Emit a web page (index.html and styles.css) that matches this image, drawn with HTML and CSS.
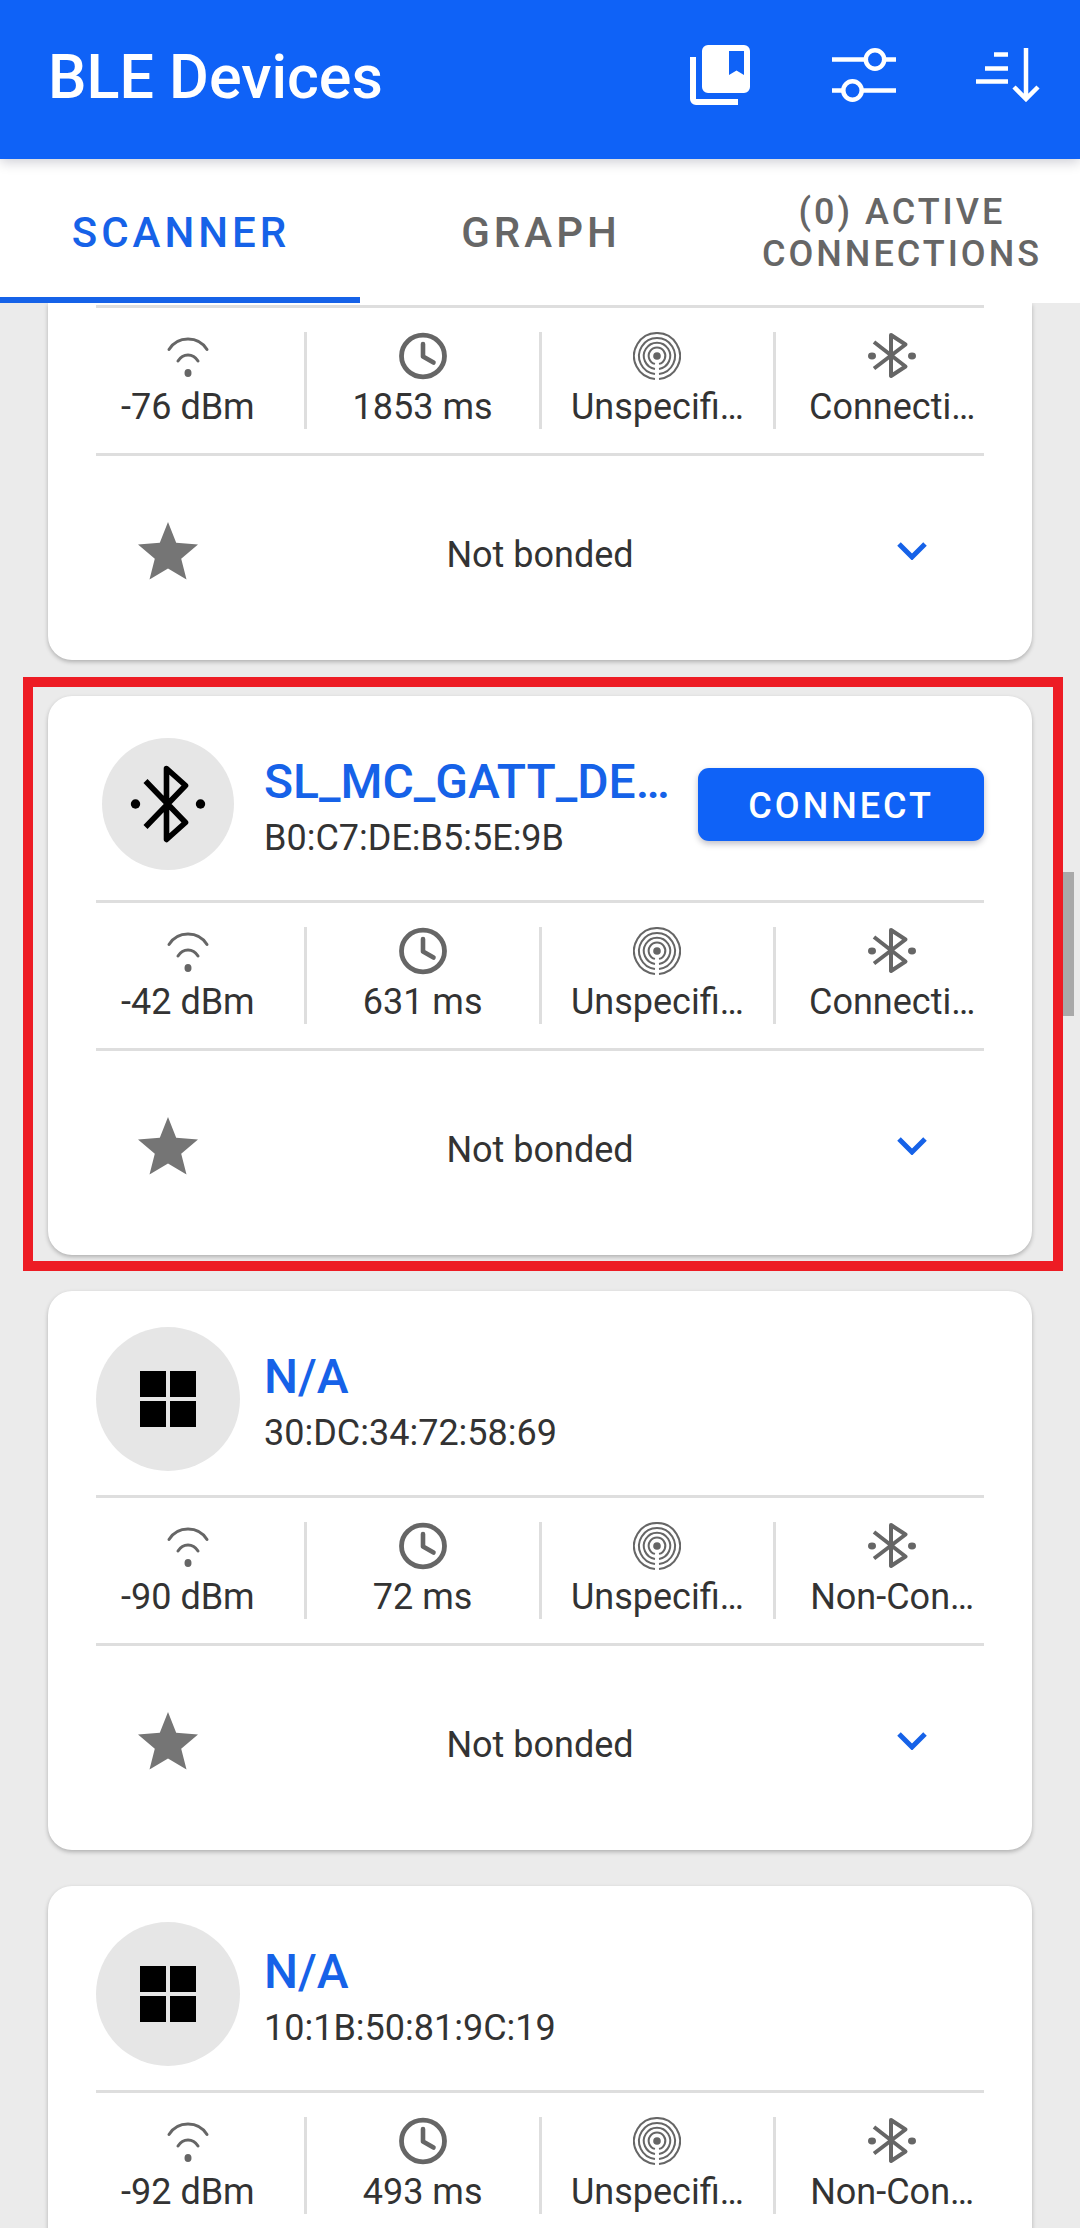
FILE: index.html
```html
<!DOCTYPE html>
<html lang="en">
<head>
<meta charset="utf-8">
<meta name="viewport" content="width=device-width, initial-scale=1">
<title>BLE Devices</title>
<link rel="stylesheet" href="styles.css">
</head>
<body>
<svg class="sprite" aria-hidden="true">
  <symbol id="i-signal" viewBox="0 0 48 48">
    <path d="M5 17.5C9 11 16 7 24 7s15 4 19 10.500M14 29c2.500-4 6-6 10-6s7.500 2 10 6" fill="none" stroke="currentColor" stroke-width="3" stroke-linecap="round"/>
    <ellipse cx="24" cy="41" rx="3.500" ry="4" fill="currentColor"/>
  </symbol>
  <symbol id="i-clock" viewBox="0 0 48 48">
    <ellipse cx="24" cy="24" rx="21.500" ry="20.800" fill="none" stroke="currentColor" stroke-width="4.800"/>
    <path d="M24 12v12.500l10.500 6" fill="none" stroke="currentColor" stroke-width="4.600" stroke-linecap="round" stroke-linejoin="round"/>
  </symbol>
  <symbol id="i-beacon" viewBox="0 0 48 48">
    <g fill="none" stroke="currentColor" stroke-width="2">
      <path d="M22 46.900A23 23 0 1 1 26 46.900"/>
      <path d="M22 41.900A18 18 0 1 1 26 41.900"/>
      <path d="M22 36.900A13.200 13.200 0 1 1 26 36.900"/>
      <path d="M22 31.900A8.300 8.300 0 1 1 26 31.900"/>
    </g>
    <circle cx="24" cy="24" r="3.800" fill="currentColor"/>
  </symbol>
  <symbol id="i-bt" viewBox="0 0 48 48">
    <path d="M6 10L37.500 34.500 23 44V3L37.500 12.500 6 36.500" fill="none" stroke="currentColor" stroke-width="4" stroke-linejoin="round"/>
    <ellipse cx="4" cy="24" rx="4" ry="3.400" fill="currentColor"/>
    <ellipse cx="44" cy="24" rx="4" ry="3.400" fill="currentColor"/>
  </symbol>
  <symbol id="i-bt-large" viewBox="0 0 80 80">
    <path d="M17.500 17L57.500 58.500 38.500 75.500V4.500L57.500 21.500 17.500 63" fill="none" stroke="currentColor" stroke-width="5.600" stroke-linejoin="round"/>
    <circle cx="7.500" cy="40" r="4.700" fill="currentColor"/>
    <circle cx="72.500" cy="40" r="4.700" fill="currentColor"/>
  </symbol>
  <symbol id="i-grid" viewBox="0 0 56 56">
    <path d="M0 0h26v26H0zM30 0h26v26H30zM0 30h26v26H0zM30 30h26v26H30z" fill="currentColor"/>
  </symbol>
  <symbol id="i-star" viewBox="0 0 60 58">
    <path d="M30 0l8.200 20.800L60 22.500 43.200 36.800 48.500 57.500 30 46.500 11.500 57.500 16.800 36.800 0 22.500l21.800-1.700z" fill="currentColor"/>
  </symbol>
  <symbol id="i-chevron" viewBox="0 0 30 18">
    <path d="M2 2l13 13L28 2" fill="none" stroke="currentColor" stroke-width="5"/>
  </symbol>
</svg>

<header class="app-bar">
  <h1 class="app-bar__title">BLE Devices</h1>
  <button class="app-bar__action" type="button" aria-label="Saved mappings">
    <svg width="60" height="60" viewBox="0 0 60 60" fill="currentColor"><path d="M0 12h6v42h42v6H6a6 6 0 0 1-6-6z"/><path fill-rule="evenodd" d="M18 0h36a6 6 0 0 1 6 6v36a6 6 0 0 1-6 6H18a6 6 0 0 1-6-6V6a6 6 0 0 1 6-6zM39 6v24l7.500-4.500L54 30V6z"/></svg>
  </button>
  <button class="app-bar__action" type="button" aria-label="Filter">
    <svg width="64" height="54" viewBox="0 0 64 54" fill="none" stroke="currentColor" stroke-width="4.500"><path d="M0 11.500h33M53 11.500h11M0 42.500h11M31 42.500h33"/><circle cx="43" cy="11.500" r="9.200"/><circle cx="20.500" cy="42.500" r="9.200"/></svg>
  </button>
  <button class="app-bar__action" type="button" aria-label="Sort">
    <svg width="64" height="54" viewBox="0 0 64 54" fill="none" stroke="currentColor" stroke-width="4.500"><path d="M18 6.500h14M9 20.500h23M0 33.500h32M50 0v50M38 39l12 12 12-12"/></svg>
  </button>
</header>

<nav class="tabs">
  <a class="tab tab--active" href="#scanner" aria-current="page">SCANNER</a>
  <a class="tab" href="#graph">GRAPH</a>
  <a class="tab tab--small" href="#connections">(0) ACTIVE CONNECTIONS</a>
</nav>

<main class="list" id="scanner">
  <article class="card card--scrolled">
    <ul class="stats">
      <li class="stat"><svg class="icon"><use href="#i-signal"/></svg>-76 dBm</li>
      <li class="stat"><svg class="icon"><use href="#i-clock"/></svg>1853 ms</li>
      <li class="stat"><svg class="icon"><use href="#i-beacon"/></svg>Unspecifi…</li>
      <li class="stat"><svg class="icon"><use href="#i-bt"/></svg>Connecti…</li>
    </ul>
    <div class="actions">
      <button class="actions__btn" type="button" aria-label="Favorite"><svg class="star"><use href="#i-star"/></svg></button>
      <span class="actions__status">Not bonded</span>
      <button class="actions__btn" type="button" aria-label="Expand"><svg class="chevron"><use href="#i-chevron"/></svg></button>
    </div>
  </article>

  <article class="card card--highlighted">
    <div class="device">
      <span class="avatar avatar--small"><svg class="avatar__bt"><use href="#i-bt-large"/></svg></span>
      <div class="device__text">
        <h2 class="device__name">SL_MC_GATT_DE…</h2>
        <p class="device__address">B0:C7:DE:B5:5E:9B</p>
      </div>
      <button class="connect" type="button">CONNECT</button>
    </div>
    <ul class="stats">
      <li class="stat"><svg class="icon"><use href="#i-signal"/></svg>-42 dBm</li>
      <li class="stat"><svg class="icon"><use href="#i-clock"/></svg>631 ms</li>
      <li class="stat"><svg class="icon"><use href="#i-beacon"/></svg>Unspecifi…</li>
      <li class="stat"><svg class="icon"><use href="#i-bt"/></svg>Connecti…</li>
    </ul>
    <div class="actions">
      <button class="actions__btn" type="button" aria-label="Favorite"><svg class="star"><use href="#i-star"/></svg></button>
      <span class="actions__status">Not bonded</span>
      <button class="actions__btn" type="button" aria-label="Expand"><svg class="chevron"><use href="#i-chevron"/></svg></button>
    </div>
  </article>

  <article class="card">
    <div class="device">
      <span class="avatar"><svg class="avatar__grid"><use href="#i-grid"/></svg></span>
      <div class="device__text">
        <h2 class="device__name">N/A</h2>
        <p class="device__address">30:DC:34:72:58:69</p>
      </div>
    </div>
    <ul class="stats">
      <li class="stat"><svg class="icon"><use href="#i-signal"/></svg>-90 dBm</li>
      <li class="stat"><svg class="icon"><use href="#i-clock"/></svg>72 ms</li>
      <li class="stat"><svg class="icon"><use href="#i-beacon"/></svg>Unspecifi…</li>
      <li class="stat"><svg class="icon"><use href="#i-bt"/></svg>Non-Con…</li>
    </ul>
    <div class="actions">
      <button class="actions__btn" type="button" aria-label="Favorite"><svg class="star"><use href="#i-star"/></svg></button>
      <span class="actions__status">Not bonded</span>
      <button class="actions__btn" type="button" aria-label="Expand"><svg class="chevron"><use href="#i-chevron"/></svg></button>
    </div>
  </article>

  <article class="card card--cut">
    <div class="device">
      <span class="avatar"><svg class="avatar__grid"><use href="#i-grid"/></svg></span>
      <div class="device__text">
        <h2 class="device__name">N/A</h2>
        <p class="device__address">10:1B:50:81:9C:19</p>
      </div>
    </div>
    <ul class="stats">
      <li class="stat"><svg class="icon"><use href="#i-signal"/></svg>-92 dBm</li>
      <li class="stat"><svg class="icon"><use href="#i-clock"/></svg>493 ms</li>
      <li class="stat"><svg class="icon"><use href="#i-beacon"/></svg>Unspecifi…</li>
      <li class="stat"><svg class="icon"><use href="#i-bt"/></svg>Non-Con…</li>
    </ul>
  </article>
  <div class="scroll-thumb"></div>
</main>
</body>
</html>
```
FILE: styles.css
```css
:root {
  --blue: #0f62f7;
  --blue-text: #1662e8;
  --text: #333;
  --icon: #666;
  --line: #dedede;
}

* { box-sizing: border-box; }

body {
  margin: 0;
  height: 100vh;
  padding-bottom: 3px;
  display: flex;
  flex-direction: column;
  overflow: hidden;
  background: #fff;
  color: var(--text);
  font: 36px/42px Roboto, "Liberation Sans", sans-serif;
}

button {
  border: 0;
  padding: 0;
  background: none;
  color: inherit;
  font: inherit;
}

h1, h2, p, ul { margin: 0; padding: 0; }

svg { display: block; }

.sprite { position: absolute; width: 0; height: 0; }

.app-bar {
  flex: none;
  position: relative;
  display: flex;
  align-items: center;
  padding: 3px 0 12px 48px;
  background: var(--blue);
  color: #fff;
  box-shadow: 0 3px 12px rgba(0, 0, 40, .2);
}

.app-bar__title {
  flex: 1;
  padding-top: 4px;
  font-size: 61px;
  font-weight: 500;
  line-height: 72px;
}

.app-bar__action {
  display: grid;
  place-items: center;
  width: 144px;
  height: 144px;
}

.tabs {
  flex: none;
  display: grid;
  grid-template-columns: repeat(3, 1fr);
  height: 144px;
}

.tab {
  display: flex;
  align-items: center;
  justify-content: center;
  border-bottom: 6px solid transparent;
  padding: 10px 0 0 2px;
  color: var(--icon);
  font-size: 42px;
  font-weight: 500;
  letter-spacing: 4px;
  line-height: 48px;
  text-align: center;
  text-decoration: none;
}

.tab--active {
  border-color: var(--blue-text);
  color: var(--blue-text);
}

.tab--small {
  padding: 10px 28px 0 32px;
  font-size: 36px;
  letter-spacing: 3px;
  line-height: 42px;
}

.list {
  flex: 1;
  min-height: 0;
  position: relative;
  display: flex;
  flex-direction: column;
  gap: 36px;
  padding: 0 48px;
  overflow: hidden;
  background: #ebebeb;
}

.card {
  flex: none;
  position: relative;
  padding: 36px 24px 0;
  border-radius: 24px;
  background: #fff;
  box-shadow: 0 2px 4px rgba(0, 0, 0, .25);
}

.card--scrolled {
  padding-top: 2px;
  border-radius: 0 0 24px 24px;
}

.card--cut { border-radius: 24px 24px 0 0; }

.card--highlighted::after {
  content: "";
  position: absolute;
  inset: -19px -31px -16px -25px;
  border: 10px solid #ed1c24;
  pointer-events: none;
}

.device {
  display: flex;
  align-items: center;
  gap: 24px;
  margin: 0 24px 24px;
}

.avatar {
  flex: none;
  display: grid;
  place-items: center;
  width: 144px;
  height: 144px;
  border-radius: 50%;
  background: #e6e6e6;
  color: #000;
}

.avatar--small {
  width: 132px;
  height: 132px;
  margin: 6px;
}

.avatar__bt { width: 80px; height: 80px; }
.avatar__grid { width: 56px; height: 56px; }

.device__text {
  flex: 1;
  min-width: 0;
  padding-top: 8px;
  white-space: nowrap;
}

.device__name {
  color: var(--blue-text);
  font-size: 48px;
  font-weight: 500;
  line-height: 60px;
}

.device__address { line-height: 52px; }

.connect {
  flex: none;
  padding: 17px 50px 14px;
  border-radius: 11px;
  background: var(--blue);
  color: #fff;
  font-weight: 500;
  letter-spacing: 3px;
  box-shadow: 0 3px 6px rgba(0, 0, 40, .25);
}

.stats {
  position: relative;
  display: flex;
  padding: 27px 0;
  list-style: none;
}

.stats::before,
.stats::after {
  content: "";
  position: absolute;
  left: 24px;
  right: 24px;
  height: 3px;
  background: var(--line);
}

.stats::before { top: 0; }
.stats::after { bottom: 0; }

.stat {
  box-sizing: content-box;
  flex: 1;
  display: flex;
  flex-direction: column;
  align-items: center;
  gap: 6px;
  line-height: 43px;
  white-space: nowrap;
}

.stat + .stat { border-left: 3px solid var(--line); }

.icon { width: 48px; height: 48px; color: var(--icon); }

.actions {
  display: flex;
  align-items: center;
  margin: 0 24px;
  padding-bottom: 14px;
}

.actions__btn {
  display: grid;
  place-items: center;
  width: 144px;
  height: 190px;
}

.actions__status { flex: 1; padding-top: 8px; text-align: center; }

.star { width: 60px; height: 58px; color: #757575; }
.chevron { width: 30px; height: 18px; color: var(--blue-text); }

.scroll-thumb {
  position: absolute;
  top: 569px;
  right: 6px;
  width: 11px;
  height: 144px;
  background: #a9a9a9;
}
```
